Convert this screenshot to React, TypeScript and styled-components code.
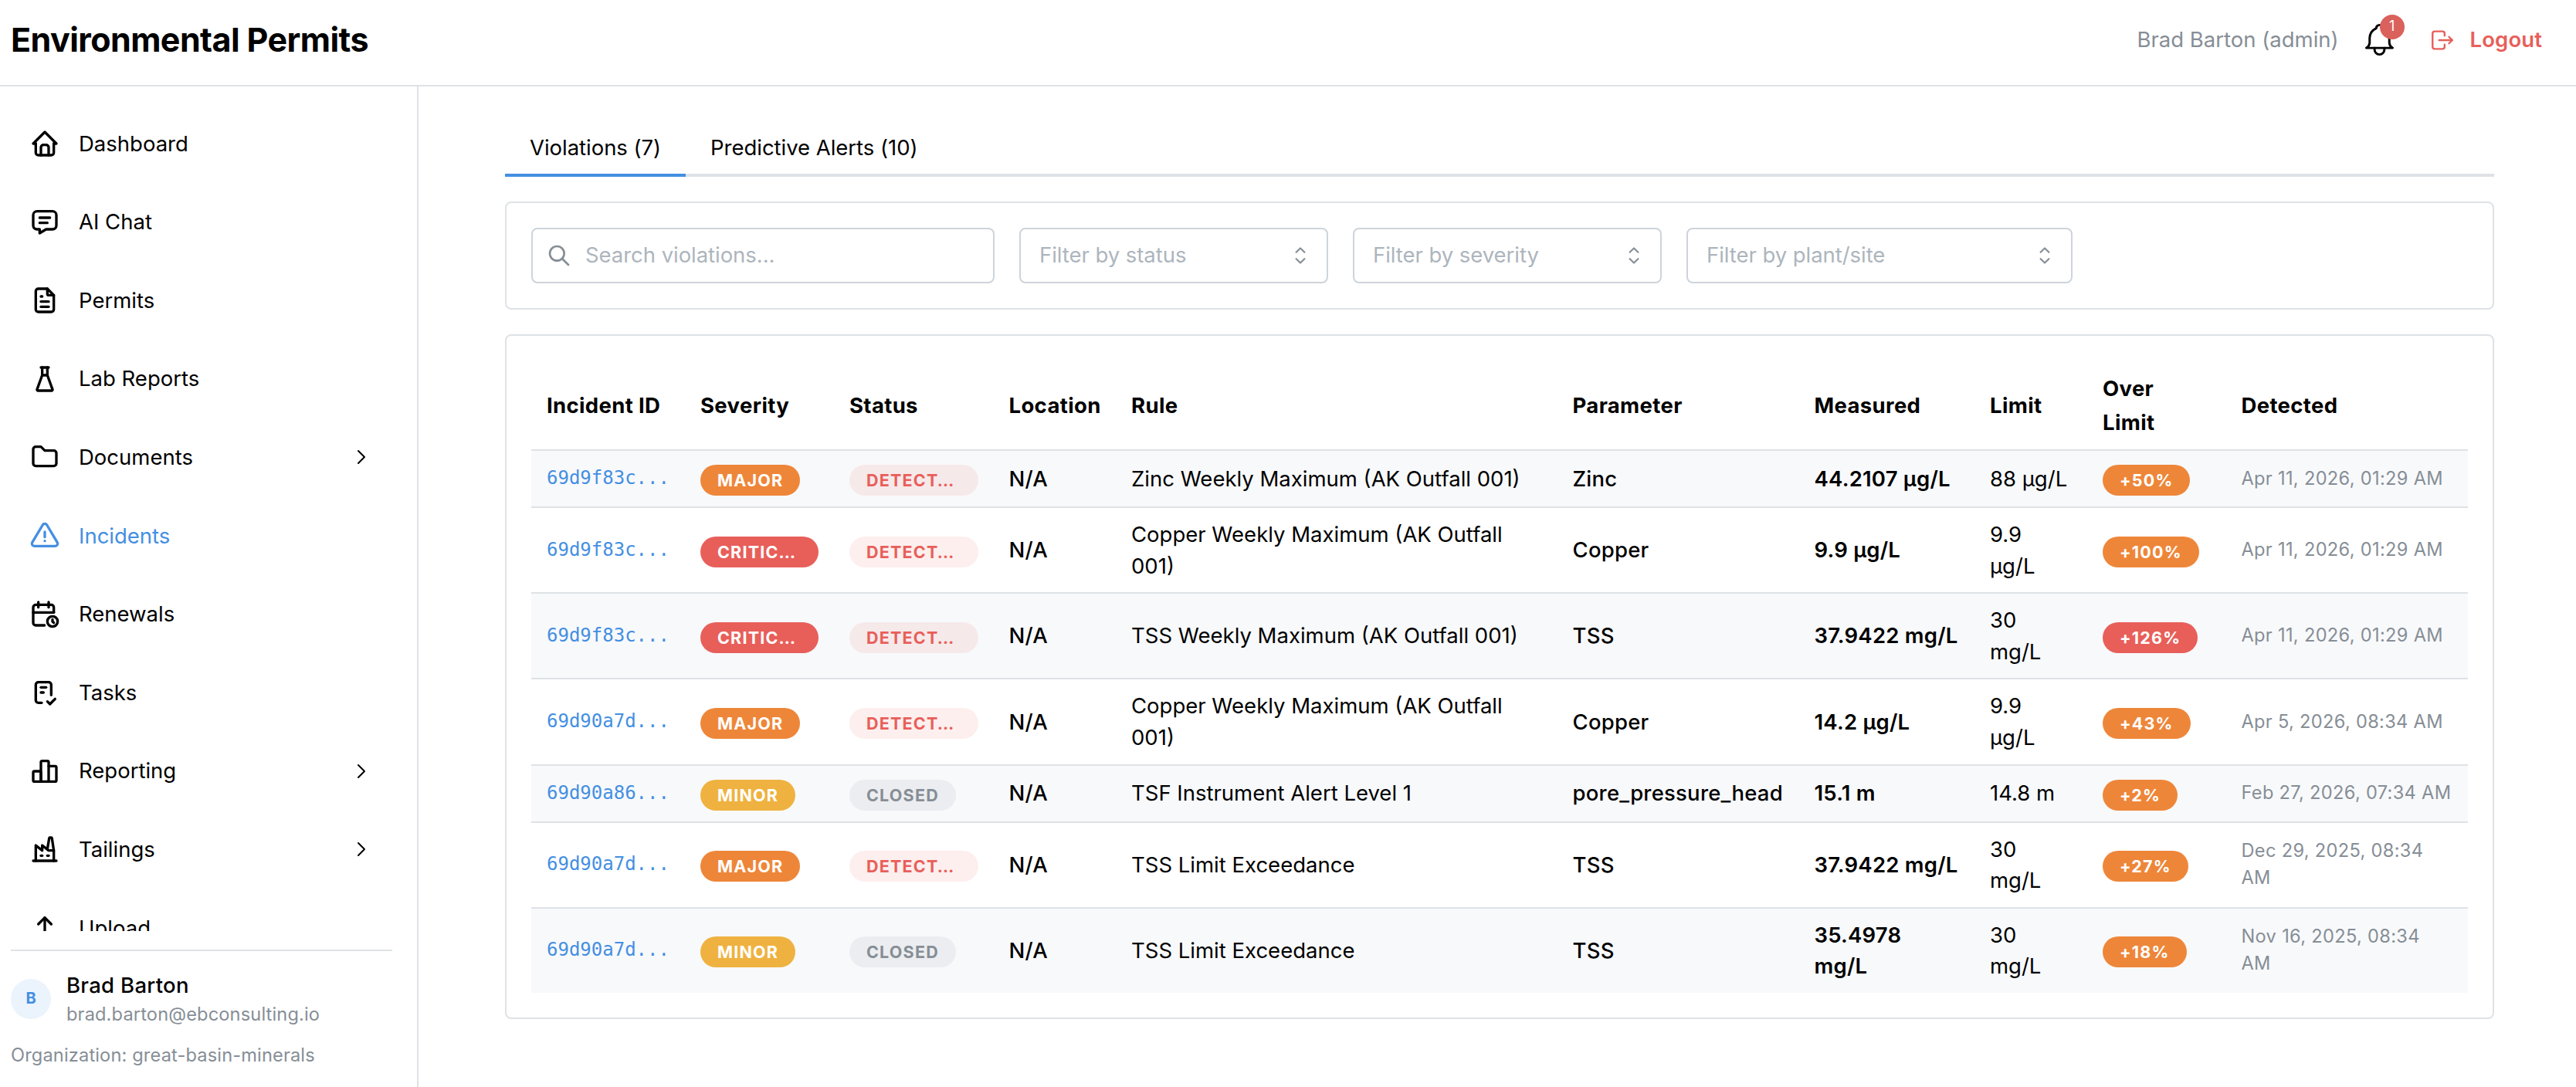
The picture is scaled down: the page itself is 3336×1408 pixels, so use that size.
import React from "react";
import styled, { createGlobalStyle, css } from "styled-components";
import {
  TbAlertTriangle,
  TbBell,
  TbBuildingFactory2,
  TbCalendarTime,
  TbChecklist,
  TbChevronRight,
  TbFileText,
  TbFlask,
  TbFolder,
  TbHome,
  TbLogout,
  TbMessage,
  TbSearch,
  TbUpload,
} from "react-icons/tb";

const colors = {
  text: "#000",
  dimmed: "#868e96",
  placeholder: "#adb5bd",
  border: "#dee2e6",
  inputBorder: "#ced4da",
  stripe: "#f8f9fb",
  blue: "#448fe2",
  red: "#e85f5a",
  orange: "#ee8639",
  yellow: "#efb240",
};

const GlobalStyle = createGlobalStyle`
  *, *::before, *::after { box-sizing: border-box; }
  body {
    margin: 0;
    background: #fff;
    color: ${colors.text};
    font-family: Inter, "Liberation Sans", sans-serif;
    font-size: 27.5px;
    line-height: 43.4px;
  }
`;

const Shell = styled.div`
  display: flex;
  flex-direction: column;
  height: 1408px;
  overflow: hidden;
`;

const Header = styled.header`
  display: flex;
  align-items: center;
  justify-content: space-between;
  flex: none;
  height: 112px;
  padding: 0 44px 7px 14px;
  border-bottom: 2px solid ${colors.border};
`;

const Title = styled.h1`
  margin: 0;
  font-size: 43px;
  font-weight: 700;
  letter-spacing: -0.57px;
`;

const HeaderActions = styled.div`
  display: flex;
  align-items: center;
`;

const UserName = styled.span`
  color: ${colors.dimmed};
  margin-right: 27px;
`;

const BellButton = styled.div`
  position: relative;
  display: flex;
  margin-right: 39px;
`;

const BellCount = styled.span`
  position: absolute;
  top: -7px;
  right: -7px;
  width: 32px;
  height: 32px;
  border-radius: 50%;
  background: #da615c;
  color: #fff;
  font-size: 18px;
  line-height: 30px;
  text-align: center;
`;

const LogoutButton = styled.div`
  display: flex;
  align-items: center;
  gap: 19px;
  color: ${colors.red};
  font-weight: 600;
  letter-spacing: 0.1px;
`;

const Body = styled.div`
  display: flex;
  flex: 1;
  min-height: 0;
`;

const Sidebar = styled.aside`
  display: flex;
  flex-direction: column;
  flex: none;
  width: 542px;
  padding: 0 32px 0 14px;
  border-right: 2px solid ${colors.border};
`;

const Nav = styled.nav`
  flex: 1;
  min-height: 0;
  overflow: hidden;
  padding-top: 23px;
  margin-bottom: 24px;
`;

const NavItem = styled.div<{ $active?: boolean }>`
  display: flex;
  align-items: center;
  height: 101.6px;
  padding: 0 24px;
  color: ${({ $active }) => ($active ? colors.blue : colors.text)};
`;

const NavLabel = styled.span`
  flex: 1;
  margin-left: 24px;
  padding-top: 1px;
`;

const UserPanel = styled.div`
  flex: none;
  height: 178px;
  padding-top: 24px;
  border-top: 2px solid ${colors.border};
`;

const UserRow = styled.div`
  display: flex;
  align-items: center;
  gap: 20px;
`;

const Avatar = styled.div`
  display: flex;
  align-items: center;
  justify-content: center;
  width: 52px;
  height: 52px;
  border-radius: 50%;
  background: #ebf3fd;
  color: ${colors.blue};
  font-size: 20px;
  font-weight: 700;
`;

const UserFullName = styled.div`
  line-height: 40.6px;
  font-weight: 500;
  letter-spacing: 0.3px;
`;

const SmallText = styled.div`
  color: ${colors.dimmed};
  font-size: 23.6px;
  line-height: 34.8px;
  letter-spacing: 0.15px;
`;

const Organization = styled(SmallText)`
  margin-top: 19px;
`;

const Main = styled.main`
  flex: 1;
  min-width: 0;
  padding: 45px 106px 0 112px;
`;

const Tabs = styled.div`
  display: flex;
  height: 72px;
  border-bottom: 4px solid ${colors.border};
`;

const Tab = styled.div<{ $active?: boolean }>`
  height: 72px;
  padding: 0 32px;
  line-height: 68px;
  letter-spacing: -0.03px;
  border-bottom: 4px solid ${({ $active }) => ($active ? colors.blue : "transparent")};
`;

const Card = styled.section`
  margin-top: 32px;
  padding: 32px;
  border: 2px solid ${colors.border};
  border-radius: 8px;
`;

const FilterBar = styled(Card)`
  display: flex;
  gap: 32px;
`;

const Field = styled.div<{ $width: number }>`
  display: flex;
  align-items: center;
  justify-content: space-between;
  width: ${({ $width }) => $width}px;
  height: 72px;
  padding: 0 16px 0 24px;
  border: 2px solid ${colors.inputBorder};
  border-radius: 8px;
  color: ${colors.placeholder};
  letter-spacing: -0.05px;

  svg {
    color: ${colors.dimmed};
  }
`;

const SearchField = styled(Field)`
  justify-content: flex-start;
  gap: 18px;
  padding-left: 18px;
`;

const Table = styled.table`
  width: 100%;
  table-layout: fixed;
  border-collapse: separate;
  border-spacing: 0;
`;

const HeadCell = styled.th<{ $width: number }>`
  width: ${({ $width }) => $width}px;
  height: 117px;
  padding: 15px 20px 13px;
  border-bottom: 2px solid ${colors.border};
  font-weight: 700;
  letter-spacing: 0.35px;
  text-align: left;
  white-space: pre-line;
`;

const BodyRow = styled.tr<{ $tall?: boolean }>`
  height: ${({ $tall }) => ($tall ? 111.2 : 74)}px;

  &:nth-child(odd) {
    background: ${colors.stripe};
  }

  &:last-child {
    height: 109px;
  }

  &:last-child td {
    border-bottom: none;
  }
`;

const Cell = styled.td<{ $weight?: number }>`
  padding: 0 20px;
  border-bottom: 2px solid ${colors.border};
  line-height: 40.6px;
  white-space: pre-line;
  ${({ $weight }) =>
    $weight &&
    css`
      font-weight: ${$weight};
      letter-spacing: 0.22px;
    `}
`;

const IncidentId = styled.span`
  display: block;
  padding-bottom: 1px;
  color: ${colors.blue};
  font-family: "DejaVu Sans Mono", monospace;
  font-size: 24px;
  white-space: nowrap;
`;

const DetectedAt = styled(SmallText)`
  letter-spacing: 0.32px;
  white-space: pre;
`;

type Tone = "red" | "orange" | "yellow" | "lightRed" | "lightGray";

const tones: Record<Tone, [string, string]> = {
  red: [colors.red, "#fff"],
  orange: [colors.orange, "#fff"],
  yellow: [colors.yellow, "#fff"],
  lightRed: ["rgba(232, 95, 90, 0.1)", colors.red],
  lightGray: ["rgba(134, 142, 150, 0.1)", colors.dimmed],
};

const Badge = styled.div<{ $tone: Tone; $full?: boolean }>`
  width: ${({ $full }) => ($full ? "auto" : "fit-content")};
  height: 40px;
  margin-top: 4px;
  padding: 0 22px;
  border-radius: 20px;
  background: ${({ $tone }) => tones[$tone][0]};
  color: ${({ $tone }) => tones[$tone][1]};
  font-size: 21.5px;
  font-weight: 700;
  line-height: 40px;
  letter-spacing: 1.2px;
  white-space: nowrap;
`;

const BarsIcon = () => (
  <svg
    width="40"
    height="40"
    viewBox="0 0 24 24"
    fill="none"
    stroke="currentColor"
    strokeWidth="2"
    strokeLinecap="round"
    strokeLinejoin="round"
  >
    <path d="M9 20V13a1 1 0 0 0 -1 -1H4a1 1 0 0 0 -1 1v6a1 1 0 0 0 1 1h16a1 1 0 0 0 1 -1V9a1 1 0 0 0 -1 -1h-5" />
    <path d="M9 20V5a1 1 0 0 1 1 -1h4a1 1 0 0 1 1 1v15" />
  </svg>
);

const SortIcon = () => (
  <svg width="36" height="36" viewBox="0 0 15 15" fill="none" stroke="currentColor" strokeWidth="0.9" strokeLinecap="round" strokeLinejoin="round">
    <path d="M5.25 5.75L7.5 3.5l2.25 2.25M5.25 9.25L7.5 11.5l2.25 -2.25" />
  </svg>
);

const navItems = [
  { label: "Dashboard", icon: <TbHome size={40} /> },
  { label: "AI Chat", icon: <TbMessage size={40} /> },
  { label: "Permits", icon: <TbFileText size={40} /> },
  { label: "Lab Reports", icon: <TbFlask size={40} /> },
  { label: "Documents", icon: <TbFolder size={40} />, nested: true },
  { label: "Incidents", icon: <TbAlertTriangle size={40} />, active: true },
  { label: "Renewals", icon: <TbCalendarTime size={40} /> },
  { label: "Tasks", icon: <TbChecklist size={40} /> },
  { label: "Reporting", icon: <BarsIcon />, nested: true },
  { label: "Tailings", icon: <TbBuildingFactory2 size={40} />, nested: true },
  { label: "Upload", icon: <TbUpload size={40} /> },
];

const columns: [string, number][] = [
  ["Incident ID", 199],
  ["Severity", 193],
  ["Status", 206.5],
  ["Location", 158.5],
  ["Rule", 571.5],
  ["Parameter", 313],
  ["Measured", 227.5],
  ["Limit", 146],
  ["Over\nLimit", 179.5],
  ["Detected", 313.5],
];

interface Violation {
  id: string;
  severity: "MAJOR" | "CRITIC…" | "MINOR";
  status: "DETECT…" | "CLOSED";
  rule: string;
  parameter: string;
  measured: string;
  limit: string;
  over: number;
  detected: string;
}

const violations: Violation[] = [
  { id: "69d9f83c...", severity: "MAJOR", status: "DETECT…", rule: "Zinc Weekly Maximum (AK Outfall 001)", parameter: "Zinc", measured: "44.2107 µg/L", limit: "88 µg/L", over: 50, detected: "Apr 11, 2026, 01:29 AM" },
  { id: "69d9f83c...", severity: "CRITIC…", status: "DETECT…", rule: "Copper Weekly Maximum (AK Outfall\n001)", parameter: "Copper", measured: "9.9 µg/L", limit: "9.9\nµg/L", over: 100, detected: "Apr 11, 2026, 01:29 AM" },
  { id: "69d9f83c...", severity: "CRITIC…", status: "DETECT…", rule: "TSS Weekly Maximum (AK Outfall 001)", parameter: "TSS", measured: "37.9422 mg/L", limit: "30\nmg/L", over: 126, detected: "Apr 11, 2026, 01:29 AM" },
  { id: "69d90a7d...", severity: "MAJOR", status: "DETECT…", rule: "Copper Weekly Maximum (AK Outfall\n001)", parameter: "Copper", measured: "14.2 µg/L", limit: "9.9\nµg/L", over: 43, detected: "Apr 5, 2026, 08:34 AM" },
  { id: "69d90a86...", severity: "MINOR", status: "CLOSED", rule: "TSF Instrument Alert Level 1", parameter: "pore_pressure_head", measured: "15.1 m", limit: "14.8 m", over: 2, detected: "Feb 27, 2026, 07:34 AM" },
  { id: "69d90a7d...", severity: "MAJOR", status: "DETECT…", rule: "TSS Limit Exceedance", parameter: "TSS", measured: "37.9422 mg/L", limit: "30\nmg/L", over: 27, detected: "Dec 29, 2025, 08:34\nAM" },
  { id: "69d90a7d...", severity: "MINOR", status: "CLOSED", rule: "TSS Limit Exceedance", parameter: "TSS", measured: "35.4978\nmg/L", limit: "30\nmg/L", over: 18, detected: "Nov 16, 2025, 08:34\nAM" },
];

const severityTone: Record<Violation["severity"], Tone> = {
  MAJOR: "orange",
  "CRITIC…": "red",
  MINOR: "yellow",
};

const ViolationRow = ({ v }: { v: Violation }) => (
  <BodyRow $tall={v.limit.includes("\n")}>
    <Cell>
      <IncidentId>{v.id}</IncidentId>
    </Cell>
    <Cell>
      <Badge $tone={severityTone[v.severity]} $full={v.severity === "CRITIC…"}>
        {v.severity}
      </Badge>
    </Cell>
    <Cell>
      <Badge $tone={v.status === "CLOSED" ? "lightGray" : "lightRed"} $full={v.status !== "CLOSED"}>
        {v.status}
      </Badge>
    </Cell>
    <Cell $weight={500}>N/A</Cell>
    <Cell>{v.rule}</Cell>
    <Cell $weight={500}>{v.parameter}</Cell>
    <Cell $weight={600}>{v.measured}</Cell>
    <Cell>{v.limit}</Cell>
    <Cell>
      <Badge $tone={v.over > 100 ? "red" : "orange"}>{`+${v.over}%`}</Badge>
    </Cell>
    <Cell>
      <DetectedAt>{v.detected}</DetectedAt>
    </Cell>
  </BodyRow>
);

export default function App() {
  return (
    <>
      <GlobalStyle />
      <Shell>
        <Header>
          <Title>Environmental Permits</Title>
          <HeaderActions>
            <UserName>Brad Barton (admin)</UserName>
            <BellButton>
              <TbBell size={51} strokeWidth={1.4} />
              <BellCount>1</BellCount>
            </BellButton>
            <LogoutButton>
              <TbLogout size={34} strokeWidth={1.7} />
              Logout
            </LogoutButton>
          </HeaderActions>
        </Header>
        <Body>
          <Sidebar>
            <Nav>
              {navItems.map(({ label, icon, nested, active }) => (
                <NavItem key={label} $active={active}>
                  {icon}
                  <NavLabel>{label}</NavLabel>
                  {nested && <TbChevronRight size={32} strokeWidth={1.5} />}
                </NavItem>
              ))}
            </Nav>
            <UserPanel>
              <UserRow>
                <Avatar>B</Avatar>
                <div>
                  <UserFullName>Brad Barton</UserFullName>
                  <SmallText>brad.barton@ebconsulting.io</SmallText>
                </div>
              </UserRow>
              <Organization>Organization: great-basin-minerals</Organization>
            </UserPanel>
          </Sidebar>
          <Main>
            <Tabs>
              <Tab $active>Violations (7)</Tab>
              <Tab>Predictive Alerts (10)</Tab>
            </Tabs>
            <FilterBar>
              <SearchField $width={600}>
                <TbSearch size={32} />
                Search violations...
              </SearchField>
              <Field $width={400}>
                Filter by status
                <SortIcon />
              </Field>
              <Field $width={400}>
                Filter by severity
                <SortIcon />
              </Field>
              <Field $width={500}>
                Filter by plant/site
                <SortIcon />
              </Field>
            </FilterBar>
            <Card>
              <Table>
                <thead>
                  <tr>
                    {columns.map(([label, width]) => (
                      <HeadCell key={label} $width={width}>
                        {label}
                      </HeadCell>
                    ))}
                  </tr>
                </thead>
                <tbody>
                  {violations.map((v, i) => (
                    <ViolationRow key={i} v={v} />
                  ))}
                </tbody>
              </Table>
            </Card>
          </Main>
        </Body>
      </Shell>
    </>
  );
}
